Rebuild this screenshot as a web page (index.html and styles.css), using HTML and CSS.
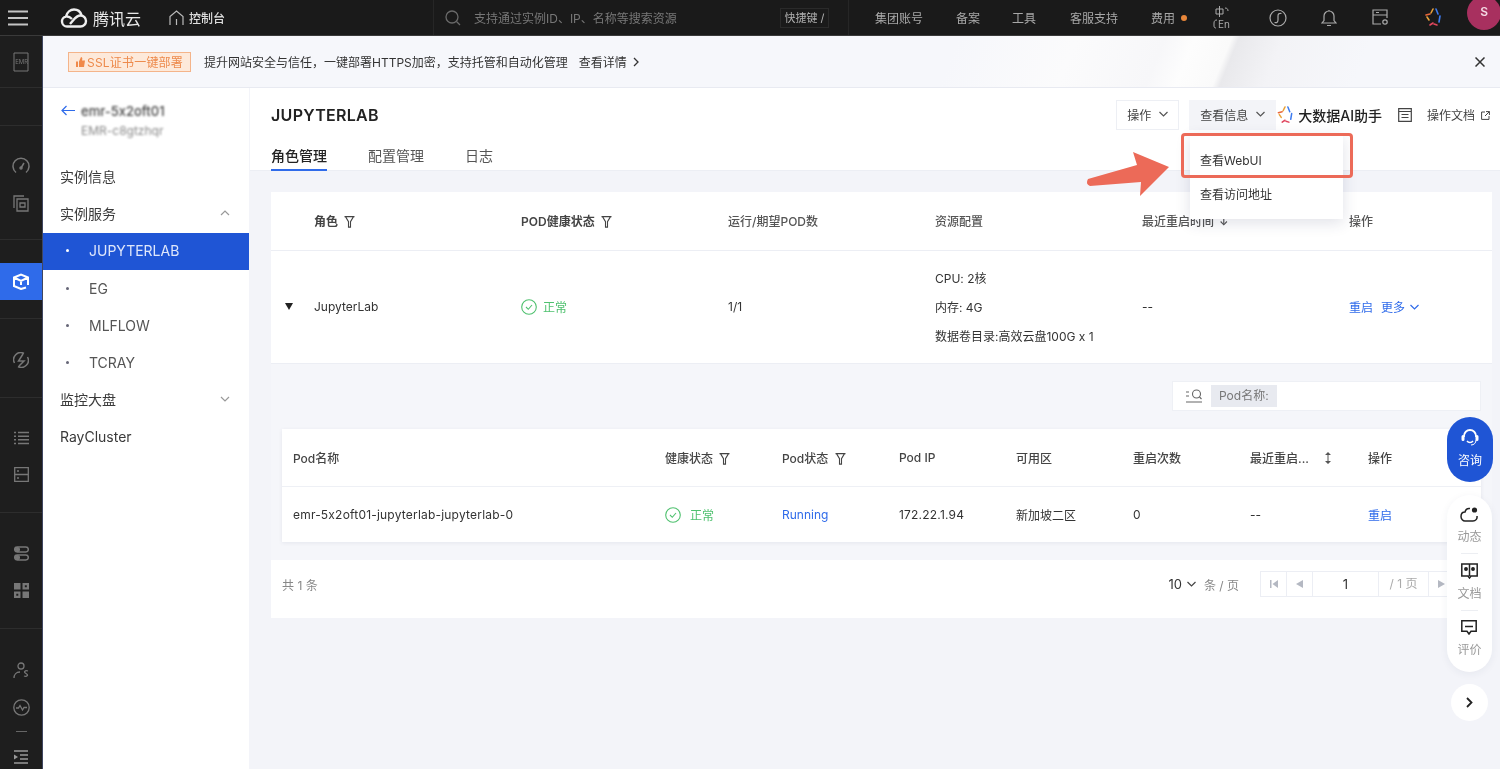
FILE: index.html
```html
<!DOCTYPE html>
<html>
<head>
    <meta charset="utf-8">
    <title>JUPYTERLAB</title>
    <link rel="stylesheet" href="styles.css">
</head>
<body>
<div class="page">

    <!-- top bar -->
    <div class="topbar">
        <svg class="burger" width="20" height="16" viewBox="0 0 20 16"><path d="M0 1.500h20M0 8h20M0 14.500h20" stroke="#c4c4c4" stroke-width="1.800"/></svg>
        <svg class="cloud" width="28" height="20" viewBox="0 0 28 20" fill="none" stroke="#eee" stroke-width="2.400"><path d="M7 18.500a5 5 0 0 1-1-9.900C7 4 10.500 1.500 14 1.500c3.500 0 6.500 2.300 7.500 5.600"/><path d="M7 18.500h13.500a5.500 5.500 0 0 0 0-11c-3.500 0-5.500 2.500-7.500 5l-3 3.500"/><path d="M7 8.500c2 0 3.500 1 5 2.500"/></svg>
        <span class="brand">腾讯云</span>
        <svg class="home" width="15" height="16" viewBox="0 0 15 16" fill="none" stroke="#bbb" stroke-width="1.200"><path d="M1 15V6.500L7.500 1 14 6.500V15M7.500 9v6"/></svg>
        <span class="console">控制台</span>
        <div class="search">
            <svg width="16" height="16" viewBox="0 0 16 16" fill="none" stroke="#6a6a6a" stroke-width="1.300"><circle cx="7" cy="7" r="6"/><path d="M11.500 11.500L15 15"/></svg>
            <span>支持通过实例ID、IP、名称等搜索资源</span>
        </div>
        <div class="shortcut">快捷键 /</div>
        <div class="top-links">
            <span class="link-a">集团账号</span>
            <span class="link-b">备案</span>
            <span class="link-c">工具</span>
            <span class="link-d">客服支持</span>
            <span class="link-e">费用</span>
            <i class="fee-dot"></i>
            <svg class="ic-lang" width="18" height="26" viewBox="0 0 18 26" fill="none" stroke="#aaa" stroke-width="1"><path d="M3 4h7v5H3zM6.500 1v11M12 3c2 0 3 1 3 3M4 15c-2 0-3 1-3 3v3c0 1.500 1 2 2 2"/><text x="5" y="23" fill="#aaa" stroke="none" font-size="10" font-family="Inter">En</text></svg>
            <svg class="ic-round" width="18" height="18" viewBox="0 0 18 18" fill="none" stroke="#aaa" stroke-width="1.200"><circle cx="9" cy="9" r="8"/><path d="M12.500 4.500C10 4 9 5 9 7v4c0 2-1 3-3.500 2.500"/></svg>
            <svg class="ic-bell" width="16" height="18" viewBox="0 0 16 18" fill="none" stroke="#aaa" stroke-width="1.200"><path d="M1 14h14l-2-2.500V7a5 5 0 0 0-10 0v4.500zM6 16.500h4M8 1v1"/></svg>
            <svg class="ic-card" width="17" height="17" viewBox="0 0 17 17" fill="none" stroke="#aaa" stroke-width="1.200"><path d="M9 15H1V1h14v8M1 6h14M4 3.500h3"/><circle cx="13" cy="13" r="2.200"/></svg>
            <svg class="ic-star" width="17" height="20" viewBox="0 0 17 20" fill="none" stroke-width="1.600" stroke-linecap="round"><path d="M6 5l2-4" stroke="#e9a23b"/><path d="M11 1l2 5" stroke="#3d7bf0"/><path d="M15 8l-1 6" stroke="#3d7bf0"/><path d="M12 17l-3-1" stroke="#e0475f"/><path d="M5 17l3-2" stroke="#e0475f"/><path d="M2 9l2 3" stroke="#e9a23b"/><path d="M1 7l4-1" stroke="#e9683b"/></svg>
            <span class="avatar">S</span>
        </div>
    </div>

    <div class="main">

        <!-- icon rail -->
        <div class="rail">
            <div class="rail-sec sec-emr">
                <svg width="16" height="20" viewBox="0 0 16 20" fill="none" stroke="#777" stroke-width="1"><path d="M1 1h14v18H1z"/><text x="2.200" y="12" fill="#777" stroke="none" font-size="6" font-family="Inter">EMR</text></svg>
            </div>
            <div class="rail-sec sec-blank"></div>
            <div class="rail-sec sec-a">
                <svg width="18" height="18" viewBox="0 0 18 18" fill="none" stroke="#777" stroke-width="1.500"><path d="M4 15.500a8 8 0 1 1 10 0"/><path d="M9 11l3-5"/><circle cx="9" cy="11" r="1"/></svg>
                <svg width="16" height="17" viewBox="0 0 16 17" fill="none" stroke="#777" stroke-width="1.300"><path d="M4 4h11v12H4zM1 13V1h10M7 8h5v4H7z"/></svg>
            </div>
            <div class="rail-sec sec-b">
                <div class="rail-active">
                    <svg width="16" height="17" viewBox="0 0 16 17" fill="none" stroke="#fff" stroke-width="2"><path d="M13 14.500l-5 1.500-7-3V4.500L8 1.500l7 3V12M1 4.500l7 3.500 7-3.500M8 8v4"/></svg>
                </div>
            </div>
            <div class="rail-sec sec-c">
                <svg width="16" height="16" viewBox="0 0 16 16" fill="none" stroke="#777" stroke-width="1.500"><path d="M1.500 11A7 7 0 0 1 11 1.500M14.500 5A7 7 0 0 1 5 14.500M10 2L5.500 9H11L6 14"/></svg>
            </div>
            <div class="rail-sec sec-d">
                <svg width="15" height="14" viewBox="0 0 15 14" stroke="#777" stroke-width="1.500"><path d="M0 1.500h2M4 1.500h11M0 5.200h2M4 5.200h11M0 8.800h2M4 8.800h11M0 12.500h2M4 12.500h11"/></svg>
                <svg width="15" height="15" viewBox="0 0 15 15" fill="none" stroke="#777" stroke-width="1.300"><path d="M.7.700h13.600v13.600H.7zM.7 7.500h13.600M3 4h2M3 11h2"/></svg>
            </div>
            <div class="rail-sec sec-e">
                <svg width="15" height="15" viewBox="0 0 15 15" fill="none" stroke="#777" stroke-width="1.500"><rect x=".7" y="1" width="13.600" height="5" rx="2.500"/><rect x=".7" y="9" width="13.600" height="5" rx="2.500"/><circle cx="3.500" cy="3.500" r="1.800" fill="#777"/><circle cx="3.500" cy="11.500" r="1.800" fill="#777"/></svg>
                <svg width="15" height="15" viewBox="0 0 15 15" fill="#777"><path d="M0 0h6.500v6.500H0zM8.500 8.500H15V15H8.500z"/><path d="M0 8.500h6.500V15H0zM2.300 10.800v2h2v-2zM8.500 0H15v6.500H8.500zM10.800 2.300v2h2v-2z" fill-rule="evenodd"/></svg>
            </div>
            <div class="rail-sec sec-f">
                <svg width="17" height="17" viewBox="0 0 17 17" fill="none" stroke="#777" stroke-width="1.300"><circle cx="8" cy="4" r="3"/><path d="M1 16c0-3 2-6 6-6M15 9c-3-1-5 1-2 2.500s1 3.500-2 2.500"/></svg>
                <svg width="17" height="17" viewBox="0 0 17 17" fill="none" stroke="#777" stroke-width="1.300"><circle cx="8.500" cy="8.500" r="7.700"/><path d="M3 9h2.500l1.500-2.500L9.500 11l1.500-2.500h3"/></svg>
                <i class="rail-dash"></i>
                <svg class="rail-last" width="14" height="14" viewBox="0 0 14 14" stroke="#999" stroke-width="1.500"><path d="M0 1h14M6 5h8M6 9h8M0 13h14"/><path d="M0 4.500L4 7l-4 2.500z" fill="#999" stroke="none"/></svg>
            </div>
        </div>

        <div class="body">

            <!-- notice -->
            <div class="notice">
                <span class="ssl-badge">
                    <svg width="9" height="10" viewBox="0 0 9 10" fill="#f0894a"><path d="M0 4.500h2V10H0zM3 4.500L5 0c1 0 1.500 1 1.300 2L6 3.500h3L8 10H3z"/></svg>
                    SSL证书一键部署
                </span>
                <span class="notice-text">提升网站安全与信任，一键部署HTTPS加密，支持托管和自动化管理</span>
                <span class="notice-link">查看详情</span>
                <svg class="notice-arrow" width="6" height="10" viewBox="0 0 6 10" fill="none" stroke="#333" stroke-width="1.300"><path d="M1 1l4 4-4 4"/></svg>
                <svg class="notice-close" width="10" height="10" viewBox="0 0 10 10" stroke="#333" stroke-width="1.500"><path d="M.5.500l9 9M9.500.500l-9 9"/></svg>
            </div>

            <div class="workspace">

                <!-- instance nav -->
                <div class="sidenav">
                    <div class="inst">
                        <svg class="inst-back" width="14" height="11" viewBox="0 0 14 11" fill="none" stroke="#2f6bea" stroke-width="1.200"><path d="M14 5.500H1M5.500 1L1 5.500 5.500 10"/></svg>
                        <div>
                            <div class="inst-name">emr-5x2oft01</div>
                            <div class="inst-id">EMR-c8gtzhqr</div>
                        </div>
                    </div>
                    <div class="nav-item">实例信息</div>
                    <div class="nav-item">实例服务
                        <svg width="10" height="6" viewBox="0 0 10 6" fill="none" stroke="#999" stroke-width="1.200"><path d="M1 5l4-4 4 4"/></svg>
                    </div>
                    <div class="nav-sub active"><i></i>JUPYTERLAB</div>
                    <div class="nav-sub"><i></i>EG</div>
                    <div class="nav-sub"><i></i>MLFLOW</div>
                    <div class="nav-sub"><i></i>TCRAY</div>
                    <div class="nav-item">监控大盘
                        <svg width="10" height="6" viewBox="0 0 10 6" fill="none" stroke="#999" stroke-width="1.200"><path d="M1 1l4 4 4-4"/></svg>
                    </div>
                    <div class="nav-item">RayCluster</div>
                </div>

                <div class="content">
                    <div class="head">
                        <div class="head-top">
                            <h1>JUPYTERLAB</h1>
                            <div class="head-tools">
                                <button class="tool-btn btn-op">操作
                                    <svg width="9" height="6" viewBox="0 0 9 6" fill="none" stroke="#555" stroke-width="1.200"><path d="M.5 1l4 4 4-4"/></svg>
                                </button>
                                <button class="tool-btn btn-info">查看信息
                                    <svg width="9" height="6" viewBox="0 0 9 6" fill="none" stroke="#555" stroke-width="1.200"><path d="M.5 1l4 4 4-4"/></svg>
                                </button>
                                <svg class="ai-star" width="17" height="19" viewBox="0 0 17 20" fill="none" stroke-width="1.600" stroke-linecap="round"><path d="M6 5l2-4" stroke="#e9a23b"/><path d="M11 1l2 5" stroke="#3d7bf0"/><path d="M15 8l-1 6" stroke="#3d7bf0"/><path d="M12 17l-3-1" stroke="#e0475f"/><path d="M5 17l3-2" stroke="#e0475f"/><path d="M2 9l2 3" stroke="#e9a23b"/><path d="M1 7l4-1" stroke="#e9683b"/></svg>
                                <span class="ai-text">大数据AI助手</span>
                                <svg class="doc-ic" width="14" height="14" viewBox="0 0 14 14" fill="none" stroke="#444" stroke-width="1.200"><path d="M.7.700h12.600v12.600H.7zM.7 3.500h12.600M3.500 6.500h7M3.500 9.500h7"/></svg>
                                <span class="doc-text">操作文档</span>
                                <svg class="ext-ic" width="9" height="9" viewBox="0 0 9 9" fill="none" stroke="#444" stroke-width="1"><path d="M4 1H.6v7.400H8V5M5 .6h3.400V4M8.400.6L4 5"/></svg>
                            </div>
                        </div>
                        <div class="tabs">
                            <span class="tab active">角色管理</span>
                            <span class="tab">配置管理</span>
                            <span class="tab">日志</span>
                        </div>
                    </div>

                    <div class="scroll">
                        <div class="card">
                            <div class="role-grid role-head">
                                <span></span>
                                <span>角色 <svg class="filter" width="11" height="12" viewBox="0 0 11 12" fill="none" stroke="#444" stroke-width="1.100"><path d="M.5.600h10M1.500.600l3 5v5.500h2V5.600l3-5"/></svg></span>
                                <span>POD健康状态 <svg class="filter" width="11" height="12" viewBox="0 0 11 12" fill="none" stroke="#444" stroke-width="1.100"><path d="M.5.600h10M1.500.600l3 5v5.500h2V5.600l3-5"/></svg></span>
                                <span class="soft">运行/期望POD数</span>
                                <span class="soft">资源配置</span>
                                <span class="soft">最近重启时间 <b class="sort-down">↓</b></span>
                                <span class="soft">操作</span>
                            </div>
                            <div class="role-grid role-row">
                                <span class="caret"></span>
                                <span>JupyterLab</span>
                                <span class="ok">
                                    <svg width="16" height="16" viewBox="0 0 16 16" fill="none" stroke="#4fc16f" stroke-width="1.100"><circle cx="8" cy="8" r="7.300"/><path d="M5 8l2.300 2.300L11 6"/></svg>
                                    正常
                                </span>
                                <span>1/1</span>
                                <div class="res">
                                    <span>CPU: 2核</span>
                                    <span>内存: 4G</span>
                                    <span>数据卷目录:高效云盘100G x 1</span>
                                </div>
                                <span>--</span>
                                <span class="links"><a>重启</a><a>更多</a>
                                    <svg width="9" height="6" viewBox="0 0 9 6" fill="none" stroke="#2f6bea" stroke-width="1.200"><path d="M.5 1l4 4 4-4"/></svg>
                                </span>
                            </div>

                            <div class="pods">
                                <div class="pod-search">
                                    <svg width="16" height="14" viewBox="0 0 16 14" fill="none" stroke="#666" stroke-width="1.100"><circle cx="10.500" cy="5" r="4"/><path d="M13.500 8l2 2M0 3h3M0 7h3M0 13h16"/></svg>
                                    <span class="pod-tag">Pod名称:</span>
                                </div>
                                <div class="pod-table">
                                    <div class="pod-grid pod-head">
                                        <span>Pod名称</span>
                                        <span>健康状态 <svg class="filter" width="11" height="12" viewBox="0 0 11 12" fill="none" stroke="#444" stroke-width="1.100"><path d="M.5.600h10M1.500.600l3 5v5.500h2V5.600l3-5"/></svg></span>
                                        <span>Pod状态 <svg class="filter" width="11" height="12" viewBox="0 0 11 12" fill="none" stroke="#444" stroke-width="1.100"><path d="M.5.600h10M1.500.600l3 5v5.500h2V5.600l3-5"/></svg></span>
                                        <span>Pod IP</span>
                                        <span>可用区</span>
                                        <span>重启次数</span>
                                        <span class="pod-sort">最近重启...
                                            <svg width="6" height="12" viewBox="0 0 6 12" fill="#555"><path d="M3 0l3 3H3.500v6H6l-3 3-3-3h2.500V3H0z"/></svg>
                                        </span>
                                        <span>操作</span>
                                    </div>
                                    <div class="pod-grid pod-row">
                                        <span class="wide-text">emr-5x2oft01-jupyterlab-jupyterlab-0</span>
                                        <span class="ok ok-wide">
                                            <svg width="16" height="16" viewBox="0 0 16 16" fill="none" stroke="#4fc16f" stroke-width="1.100"><circle cx="8" cy="8" r="7.300"/><path d="M5 8l2.300 2.300L11 6"/></svg>
                                            正常
                                        </span>
                                        <span class="link">Running</span>
                                        <span class="wide-text">172.22.1.94</span>
                                        <span>新加坡二区</span>
                                        <span>0</span>
                                        <span>--</span>
                                        <span class="link">重启</span>
                                    </div>
                                </div>
                            </div>

                            <div class="pager">
                                <span class="total">共 1 条</span>
                                <span class="per-page">10
                                    <svg width="9" height="6" viewBox="0 0 9 6" fill="none" stroke="#444" stroke-width="1.200"><path d="M.5 1l4 4 4-4"/></svg>
                                </span>
                                <span class="per-unit">条 / 页</span>
                                <div class="pager-box">
                                    <span class="pg-btn"><svg width="8" height="8" viewBox="0 0 8 8" fill="#b4b8c2"><path d="M0 0h1.500v8H0zM8 0v8L2.500 4z"/></svg></span>
                                    <span class="pg-btn"><svg width="7" height="8" viewBox="0 0 7 8" fill="#b4b8c2"><path d="M7 0v8L0 4z"/></svg></span>
                                    <span class="pg-num">1</span>
                                    <span class="pg-of">/ 1 页</span>
                                    <span class="pg-btn"><svg width="7" height="8" viewBox="0 0 7 8" fill="#b4b8c2"><path d="M0 0v8l7-4z"/></svg></span>
                                </div>
                            </div>
                        </div>
                    </div>
                </div>
            </div>
        </div>
    </div>

    <!-- dropdown and the annotation over it -->
    <div class="menu">
        <div class="menu-item">查看WebUI</div>
        <div class="menu-item">查看访问地址</div>
    </div>
    <div class="mark-box"></div>
    <svg class="mark-arrow" width="90" height="50" viewBox="1085 150 90 50"><path d="M1088 179L1137 165L1133 152L1169 167L1140 196L1141 182L1090 186Q1085 184 1088 179Z" fill="#ec6a58"/></svg>

    <!-- floating helpers -->
    <div class="consult">
        <svg width="20" height="20" viewBox="0 0 20 20" fill="none" stroke="#fff" stroke-width="1.800"><path d="M4 9V8a6 6 0 0 1 12 0v1"/><path d="M3 8.500v3M17 8.500v3" stroke-width="3" stroke-linecap="round"/><path d="M7 13c1.500 2 4.500 2 6 0" stroke-width="1.500"/><path d="M16 12c0 3-2 5-5 5" stroke-width="1"/></svg>
        <span>咨询</span>
    </div>
    <div class="helpers">
        <div class="helper">
            <svg width="18" height="15" viewBox="0 0 18 15" fill="none" stroke="#222" stroke-width="1.500"><path d="M10 1.500C7 1 5.500 3 5 5 2 5 1 7.500 1 9.500 1 12 3 14 5 14h8c2.500 0 4.500-2 4-5"/><circle cx="14.500" cy="3" r="2.600" fill="#222" stroke="none"/></svg>
            <span>动态</span>
        </div>
        <i class="helper-line"></i>
        <div class="helper">
            <svg width="17" height="16" viewBox="0 0 17 16" fill="none" stroke="#222" stroke-width="1.500"><path d="M.8 1h15.400v12H10l-1.500 2L7 13H.8zM8.500 1v12"/><circle cx="5" cy="6" r="1.200" fill="#222"/><circle cx="12" cy="6" r="1.200" fill="#222"/></svg>
            <span>文档</span>
        </div>
        <i class="helper-line"></i>
        <div class="helper">
            <svg width="16" height="15" viewBox="0 0 16 15" fill="none" stroke="#222" stroke-width="1.500"><path d="M.8.800h14.400v10.400H10L8 14l-2-2.800H.8zM4 6.500h8" /></svg>
            <span>评价</span>
        </div>
    </div>
    <div class="helper-more">
        <svg width="7" height="11" viewBox="0 0 7 11" fill="none" stroke="#222" stroke-width="1.800"><path d="M1 1l4.500 4.500L1 10"/></svg>
    </div>
</div>
</body>
</html>
```

FILE: styles.css
```css
* {
    box-sizing: border-box;
}

body {
    margin: 0;
    padding: 0;
    font-family: Inter, "Noto Sans CJK SC", sans-serif;
    font-size: 12px;
    font-feature-settings: "calt" 0;
    color: #333;
}

.page {
    position: relative;
    width: 1500px;
    height: 769px;
    overflow: hidden;
    display: flex;
    flex-direction: column;
    background-color: #f3f4f9;
    filter: blur(0.45px);
}

/* top bar */
.topbar {
    flex: none;
    height: 36px;
    display: flex;
    align-items: center;
    background-color: #1a1a1a;
    border-bottom: 1px solid #3a3a3a;
    color: #a8a8a8;
}

.burger {
    margin-left: 8px;
}

.cloud {
    margin-left: 32px;
}

.brand {
    margin-left: 5px;
    font-size: 16px;
    color: #e8e8e8;
    width: 49px;
}

.home {
    margin-left: 27px;
}

.console {
    margin-left: 5px;
    color: #ddd;
    font-weight: 500;
}

.search {
    margin-left: 208px;
    width: 339px;
    height: 100%;
    display: flex;
    align-items: center;
    gap: 13px;
    padding-left: 11px;
    border-left: 1px solid #262626;
    color: #777;
}

.shortcut {
    margin-left: 8px;
    width: 49px;
    height: 20px;
    line-height: 18px;
    text-align: center;
    border: 1px solid #2a2a2a;
    color: #b0b0b0;
    font-size: 11px;
}

.top-links {
    margin-left: 19px;
    height: 100%;
    flex: 1;
    min-width: 0;
    display: flex;
    align-items: center;
    border-left: 1px solid #262626;
}

.top-links > * {
    flex: none;
    white-space: nowrap;
}

.link-a { margin-left: 26px; }
.link-b { margin-left: 33px; }
.link-c { margin-left: 32px; }
.link-d { margin-left: 34px; }
.link-e { margin-left: 33px; }

.fee-dot {
    width: 6px;
    height: 6px;
    margin-left: 6px;
    border-radius: 50%;
    background-color: #e8863a;
}

.ic-lang { margin-left: 26px; }
.ic-round { margin-left: 38px; }
.ic-bell { margin-left: 34px; }
.ic-card { margin-left: 35px; }
.ic-star { margin-left: 36px; }

.avatar {
    width: 34px;
    height: 34px;
    margin-left: 25px;
    margin-top: -10px;
    padding-top: 8px;
    border-radius: 50%;
    background-color: #a8305f;
    color: #f3d9e3;
    font-size: 12px;
    font-weight: 600;
    text-align: center;
}

.main {
    flex: 1;
    min-height: 0;
    display: flex;
}

/* icon rail */
.rail {
    flex: none;
    width: 43px;
    display: flex;
    flex-direction: column;
    background-color: #1e1e1e;
    border-right: 1px solid #3f4660;
}

.rail-sec {
    flex: none;
    display: flex;
    flex-direction: column;
    align-items: center;
    justify-content: center;
    gap: 20px;
    padding-top: 3px;
    border-bottom: 1px solid #2d2d2d;
}

.sec-emr { height: 52px; padding-top: 0; }
.sec-blank { height: 38px; }
.sec-a { height: 114px; }
.sec-b { height: 79px; padding-top: 0; }
.sec-c { height: 79px; }
.sec-d { height: 115px; gap: 22px; }
.sec-e { height: 116px; gap: 22px; }

.sec-f {
    border-bottom: none;
    padding-top: 33px;
    justify-content: flex-start;
}

.rail-active {
    width: 100%;
    height: 37px;
    margin-top: 4px;
    display: flex;
    align-items: center;
    justify-content: center;
    background-color: #2f6bea;
}

.rail-dash {
    width: 11px;
    height: 1px;
    margin: -5px 0 -2px;
    background-color: #666;
}

/* notice */
.body {
    flex: 1;
    min-width: 0;
    display: flex;
    flex-direction: column;
}

.notice {
    flex: none;
    height: 52px;
    display: flex;
    align-items: center;
    padding-left: 25px;
    border-bottom: 1px solid #e8eaf1;
    background: linear-gradient(112deg, #f6f7fb 62%, #fbfbfc 70%, #f7f7f9 76%, #fdfdfd 78%, #fafafa 80.5%, #e9e9ec 81%, #f3f3f6 84%, #f6f7fb 90%);
}

.ssl-badge {
    width: 123px;
    height: 20px;
    display: flex;
    align-items: center;
    justify-content: center;
    gap: 2px;
    background-color: #fde9da;
    border: 1px solid #f4b48a;
    color: #ed8a4c;
    font-size: 12px;
    letter-spacing: 0.2px;
}

.notice-text {
    margin-left: 13px;
    color: #333;
}

.notice-link {
    margin-left: 11px;
    color: #333;
}

.notice-arrow {
    margin-left: 6px;
}

.notice-close {
    margin-left: auto;
    margin-right: 15px;
}

.workspace {
    flex: 1;
    min-height: 0;
    display: flex;
}

/* instance nav */
.sidenav {
    flex: none;
    width: 206px;
    background-color: #fff;
}

.inst {
    height: 70px;
    display: flex;
    padding: 14px 0 0 18px;
    gap: 6px;
}

.inst-back {
    margin-top: 3px;
}

.inst-name {
    color: #444;
    font-size: 13px;
    font-weight: 500;
    line-height: 18px;
    filter: blur(1.1px);
}

.inst-id {
    margin-top: 3px;
    color: #888;
    line-height: 16px;
    filter: blur(1.1px);
}

.nav-item {
    height: 37.3px;
    display: flex;
    align-items: center;
    justify-content: space-between;
    padding: 0 19px 2px 17px;
    font-size: 14px;
    color: #3a3a3a;
}

.nav-sub {
    height: 37.3px;
    display: flex;
    align-items: center;
    padding: 0 0 1px 23px;
    font-size: 14px;
    color: #555;
}

.nav-sub i {
    width: 3px;
    height: 3px;
    margin-right: 20px;
    border-radius: 50%;
    background-color: #667;
}

.nav-sub.active {
    background-color: #1f55d5;
    color: #dfe7fb;
}

.nav-sub.active i {
    background-color: #fff;
}

/* content header */
.content {
    flex: 1;
    min-width: 0;
    margin-left: 1px;
    display: flex;
    flex-direction: column;
}

.head {
    flex: none;
    height: 83px;
    padding: 12px 0 0 21px;
    background-color: #fff;
    border-bottom: 1px solid #eceef4;
}

.head-top {
    display: flex;
    align-items: center;
    justify-content: space-between;
    height: 30px;
}

h1 {
    margin: 0;
    font-size: 16px;
    font-weight: 600;
    letter-spacing: 0.3px;
    color: #222;
}

.head-tools {
    display: flex;
    align-items: center;
}

.tool-btn {
    height: 30px;
    display: flex;
    align-items: center;
    justify-content: center;
    gap: 8px;
    padding: 0 0 2px;
    font: inherit;
    color: #444;
    background-color: #fff;
    border: 1px solid #edeff4;
}

.btn-op {
    width: 63px;
}

.btn-info {
    width: 87px;
    margin-left: 10px;
    background-color: #f3f4f8;
    border-color: #f3f4f8;
}

.ai-star {
    margin-left: 1px;
}

.ai-text {
    margin-left: 4px;
    font-size: 14px;
    font-weight: 500;
    color: #222;
}

.doc-ic {
    margin-left: 16px;
}

.doc-text {
    margin-left: 15px;
    padding-bottom: 2px;
    color: #444;
}

.ext-ic {
    margin-left: 6px;
    margin-right: 10px;
}

.tabs {
    display: flex;
    height: 41px;
    gap: 41px;
}

.tab {
    height: 41px;
    padding-top: 16px;
    font-size: 14px;
    line-height: 20px;
    color: #555;
}

.tab.active {
    color: #222;
    font-weight: 500;
    border-bottom: 2px solid #2f6bea;
}

/* role table */
.scroll {
    flex: 1;
    padding: 21px 8px 0 21px;
}

.card {
    height: 426px;
    display: flex;
    flex-direction: column;
    background-color: #fff;
}

.role-grid {
    display: grid;
    grid-template-columns: 43px repeat(5, 207px) 1fr;
    align-items: center;
}

.role-head {
    flex: none;
    height: 59px;
    padding-bottom: 1px;
    border-bottom: 1px solid #eceef4;
    font-weight: 600;
    color: #444;
}

.role-head .soft {
    font-weight: 500;
    color: #555;
}

.filter {
    margin-left: 3px;
    vertical-align: -2px;
}

.sort-down {
    margin-left: 2px;
    font-size: 10px;
}

.role-row {
    flex: none;
    height: 113px;
    padding-bottom: 1px;
    border-bottom: 1px solid #eceef4;
}

.caret {
    width: 0;
    height: 0;
    margin-left: 14px;
    border-left: 4.5px solid transparent;
    border-right: 4.5px solid transparent;
    border-top: 7px solid #222;
}

.ok {
    display: flex;
    align-items: center;
    gap: 6px;
    color: #4fc16f;
}

.ok-wide {
    gap: 9px;
}

.res {
    display: flex;
    flex-direction: column;
    gap: 11px;
    padding-top: 2px;
    line-height: 18px;
}

.links {
    display: flex;
    align-items: center;
    color: #2f6bea;
}

.links a {
    margin-right: 8px;
}

.links a + a {
    margin-right: 5px;
}

/* pods */
.pods {
    flex: none;
    height: 196px;
    padding: 17px 11px 0;
    background-color: #f5f6fa;
}

.pod-search {
    width: 309px;
    height: 30px;
    margin-left: auto;
    display: flex;
    align-items: center;
    gap: 9px;
    padding-left: 13px;
    background-color: #fff;
    border: 1px solid #eef0f5;
}

.pod-tag {
    padding: 0 8px;
    height: 22px;
    line-height: 22px;
    background-color: #e8eaf0;
    color: #777;
}

.pod-table {
    margin-top: 18px;
    background-color: #fff;
    box-shadow: 0 1px 4px rgba(40, 50, 90, 0.08);
}

.pod-grid {
    display: grid;
    grid-template-columns: 372px repeat(5, 117px) 118px 1fr;
    align-items: center;
    padding-left: 11px;
}

.pod-head {
    height: 58px;
    border-bottom: 1px solid #eef0f5;
    font-weight: 500;
    color: #444;
}

.pod-sort {
    display: flex;
    align-items: center;
    gap: 16px;
}

.pod-row {
    height: 55px;
}

.wide-text {
    letter-spacing: 0.2px;
}

.link {
    color: #2f6bea;
}

/* pager */
.pager {
    flex: 1;
    display: flex;
    align-items: center;
    padding: 0 11px 10px;
    color: #888;
}

.total {
    margin-right: auto;
}

.per-page {
    display: flex;
    align-items: center;
    gap: 5px;
    font-size: 13px;
    color: #333;
}

.per-unit {
    margin-left: 8px;
}

.pager-box {
    display: flex;
    height: 26px;
    margin-left: 21px;
    margin-right: 25px;
    border: 1px solid #eceef4;
}

.pg-btn {
    width: 26px;
    display: flex;
    align-items: center;
    justify-content: center;
    border-right: 1px solid #eceef4;
}

.pg-num {
    width: 66px;
    line-height: 24px;
    text-align: center;
    font-size: 13px;
    color: #333;
    border-right: 1px solid #eceef4;
}

.pg-of {
    width: 50px;
    line-height: 24px;
    text-align: center;
    color: #aaa;
    border-right: 1px solid #eceef4;
}

/* dropdown */
.menu {
    position: absolute;
    left: 1190px;
    top: 134px;
    width: 153px;
    height: 85px;
    padding-top: 10px;
    background-color: #fff;
    box-shadow: 0 4px 14px rgba(40, 50, 90, 0.14);
}

.menu-item {
    height: 34px;
    line-height: 34px;
    padding-left: 10px;
    color: #333;
}

.mark-box {
    position: absolute;
    left: 1181px;
    top: 133px;
    width: 172px;
    height: 45px;
    border: 3px solid #ec6a58;
    border-radius: 4px;
}

.mark-arrow {
    position: absolute;
    left: 1085px;
    top: 150px;
}

/* floating helpers */
.consult {
    position: absolute;
    left: 1447px;
    top: 417px;
    width: 46px;
    height: 65px;
    display: flex;
    flex-direction: column;
    align-items: center;
    padding-top: 11px;
    gap: 3px;
    border-radius: 23px;
    background-color: #1f55d5;
    color: #fff;
}

.helpers {
    position: absolute;
    left: 1447px;
    top: 495px;
    width: 45px;
    height: 177px;
    display: flex;
    flex-direction: column;
    align-items: center;
    padding-top: 12px;
    border-radius: 23px;
    background-color: #fff;
    box-shadow: 0 2px 8px rgba(40, 50, 90, 0.06);
}

.helper {
    display: flex;
    flex-direction: column;
    align-items: center;
    gap: 5px;
    color: #999;
}

.helper-line {
    width: 17px;
    height: 1px;
    margin: 9px 0 9px;
    background-color: #eceef2;
}

.helper-more {
    position: absolute;
    left: 1451px;
    top: 684px;
    width: 37px;
    height: 37px;
    display: flex;
    align-items: center;
    justify-content: center;
    border-radius: 50%;
    background-color: #fff;
}
```
